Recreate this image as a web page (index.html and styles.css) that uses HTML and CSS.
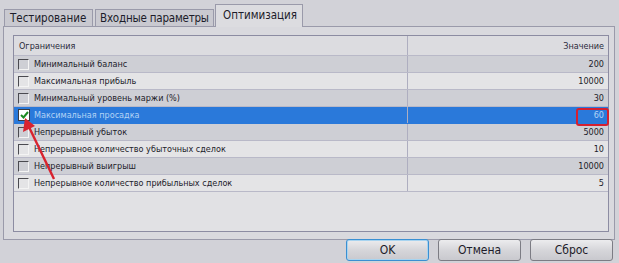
FILE: index.html
```html
<!DOCTYPE html>
<html>
<head>
<meta charset="utf-8">
<link rel="stylesheet" href="styles.css">
</head>
<body>
<div class="window">
  <div class="tabs">
    <div class="tab">Тестирование</div>
    <div class="tab second">Входные параметры</div>
    <div class="tab active">Оптимизация</div>
  </div>
  <div class="panel">
    <div class="list">
      <div class="row head">
        <div class="c1">Ограничения</div>
        <div class="c2">Значение</div>
      </div>
      <div class="row dark"><div class="c1"><span class="cb"></span>Минимальный баланс</div><div class="c2">200</div></div>
      <div class="row light"><div class="c1"><span class="cb"></span>Максимальная прибыль</div><div class="c2">10000</div></div>
      <div class="row dark"><div class="c1"><span class="cb"></span>Минимальный уровень маржи (%)</div><div class="c2">30</div></div>
      <div class="row sel"><div class="c1"><span class="cb on"><svg width="9" height="8" viewBox="0 0 9 8"><path d="M1 4 L3.5 6.5 L8 1" fill="none" stroke="#1c8a22" stroke-width="2"/></svg></span>Максимальная просадка</div><div class="c2">60</div></div>
      <div class="row dark"><div class="c1"><span class="cb"></span>Непрерывный убыток</div><div class="c2">5000</div></div>
      <div class="row light"><div class="c1"><span class="cb"></span>Непрерывное количество убыточных сделок</div><div class="c2">10</div></div>
      <div class="row dark"><div class="c1"><span class="cb"></span>Непрерывный выигрыш</div><div class="c2">10000</div></div>
      <div class="row light"><div class="c1"><span class="cb"></span>Непрерывное количество прибыльных сделок</div><div class="c2">5</div></div>
    </div>
  </div>
  <div class="buttons">
    <div class="btn ok">OK</div>
    <div class="btn">Отмена</div>
    <div class="btn">Сброс</div>
  </div>
  <div class="redbox"></div>
  <svg class="arrow" width="619" height="263" viewBox="0 0 619 263">
    <line x1="54" y1="179" x2="29" y2="127" stroke="#d8232f" stroke-width="2.4"/>
    <path d="M25 118 L23 132 L35 126 Z" fill="#d8232f"/>
  </svg>
</div>
</body>
</html>
```
FILE: styles.css
```css
html, body {
  margin: 0;
  padding: 0;
}
body {
  width: 619px;
  height: 263px;
  background: #d2d2d8;
  font-family: "DejaVu Sans Condensed", "DejaVu Sans", sans-serif;
  font-stretch: condensed;
  color: #1c1c2a;
  overflow: hidden;
}
.window {
  position: relative;
  width: 619px;
  height: 263px;
}
.tabs {
  display: flex;
  align-items: flex-end;
  height: 26px;
  padding-left: 4px;
  position: relative;
  z-index: 2;
}
.tab {
  height: 17px;
  line-height: 16px;
  padding: 0 5px;
  font-size: 11.5px;
  white-space: nowrap;
  background: #c9c9d0;
  border: 1px solid #9a9aaa;
  border-bottom: none;
  margin-right: 2px;
  box-sizing: border-box;
}
.tab:first-child { width: 89px; }
.tab.second { width: 119px; padding-left: 4px; letter-spacing: -0.2px; }
.tab.active {
  width: 88px;
  height: 23px;
  line-height: 20px;
  background: #dcdce0;
  margin-bottom: -1px;
  padding-left: 7px;
  margin-left: -1px;
}
.panel {
  margin-left: 3px;
  width: 612px;
  height: 214px;
  box-sizing: border-box;
  border: 1px solid #9a9aaa;
  background: #d9d9de;
  padding: 8px 0 0 9px;
}
.list {
  width: 596px;
  height: 197px;
  box-sizing: border-box;
  border: 1px solid #8c8ca2;
  background: #e1e1e4;
  font-size: 9px;
}
.row {
  display: flex;
  height: 17px;
  box-sizing: border-box;
  border-bottom: 1px solid #b9b9c8;
  align-items: center;
}
.row.head {
  height: 20px;
  background: #dcdce0;
}
.row.dark { background: #cecfd5; }
.row.light { background: #e4e4e6; }
.row.sel { background: #2a79da; color: #b3d3f5; border-bottom-color: #2a79da; }
.c1 {
  width: 394px;
  box-sizing: border-box;
  height: 100%;
  display: flex;
  align-items: center;
  padding-left: 4px;
  border-right: 1px solid #aeaec0;
  white-space: nowrap;
}
.head .c1 { padding-left: 5px; color: #2a2a3a; }
.c2 {
  flex: 1;
  text-align: right;
  padding-right: 4px;
}
.head .c2 { color: #2a2a3a; }
.cb {
  width: 11px;
  height: 11px;
  box-sizing: border-box;
  border-top: 1px solid #4a4a50;
  border-left: 1px solid #4a4a50;
  border-right: 1px solid #f4f4f4;
  border-bottom: 1px solid #f4f4f4;
  margin-right: 5px;
  display: flex;
  align-items: center;
  justify-content: center;
  flex: none;
}
.cb.on {
  width: 12px;
  height: 12px;
  background: #ffffff;
  border: 1px solid #3a3a40;
  margin-right: 4px;
}
.buttons {
  display: flex;
  justify-content: flex-end;
  gap: 9px;
  padding-right: 6px;
  margin-top: -1px;
}
.btn {
  width: 83px;
  height: 22px;
  box-sizing: border-box;
  border: 1px solid #7c7c84;
  border-radius: 3px;
  background: linear-gradient(#ececee, #d6d6da 50%, #c9c9ce);
  font-size: 12px;
  text-align: center;
  line-height: 20px;
  color: #1c1c2a;
}
.btn.ok {
  border-color: #3a8fd2;
  box-shadow: inset 0 0 0 1px #a8d4f0;
}
.redbox {
  position: absolute;
  left: 576px;
  top: 108px;
  width: 33px;
  height: 18px;
  box-sizing: border-box;
  border: 2px solid #d42030;
  border-radius: 3px;
}
.arrow {
  position: absolute;
  left: 0;
  top: 0;
  pointer-events: none;
}
```
